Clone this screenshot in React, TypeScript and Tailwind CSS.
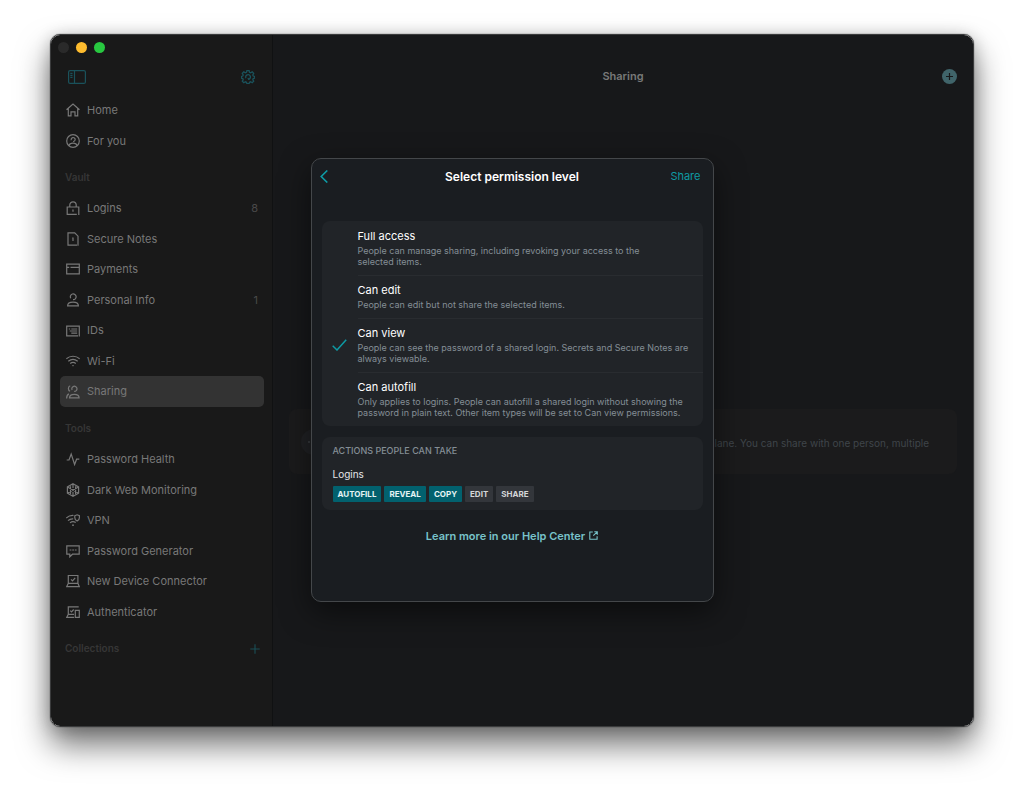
import type { ReactNode } from "react"

type iconProps = {
    children: ReactNode
}
function Icon({ children }: iconProps) {
    return (
        <svg viewBox="0 0 14 14" className="size-[14px] shrink-0" fill="none" stroke="currentColor" strokeWidth="1.2" aria-hidden="true">
            {children}
        </svg>
    )
}

const icons = {
    home: <Icon><path d="M.5 6.800 7 1l6.500 5.800M2.300 5.500v7.400h2.700V8.800h4v4.100h2.700V5.500" /></Icon>,
    forYou: <Icon><circle cx="7" cy="7" r="6.300" /><path d="M5.300 6.200A2 2 0 1 1 7 7.500M3 11.600c.4-1.600 1.700-2.400 4-2.400s3.600.8 4 2.400" /></Icon>,
    logins: <Icon><path d="M3.800 6V4a3.200 3.200 0 0 1 6.400 0v2M10.800 13.300H1.200V6h11.600v7.900M7 8.600v2.200M6.300 9h.8" /></Icon>,
    notes: <Icon><path d="M11 13.200H2V.8h6.700L12 4.200v9.600M7 5.500v3.400M6.200 6h.8" /></Icon>,
    payments: <Icon><path d="M.7 2.200h12.600v9.600H.7zM.7 5.300h2.500M4.500 5.300h8.800" /></Icon>,
    personal: <Icon><path d="M4.700 5.200A2.900 2.900 0 1 1 7 6.700M1.600 12.900c0-2.600 1.700-3.700 5.400-3.700s5.400 1.100 5.400 3.700z" /></Icon>,
    ids: <Icon><path d="M12 11.800H.7V2.200h12.600v10.200M2.800 5h1.400M5.300 5h5.900M3.700 7h7.500M5.300 9.200h5.900" /></Icon>,
    wifi: <Icon><path d="M.3 4.700c3.900-3.300 9.500-3.300 13.400 0M2.300 7.200c2.800-2.300 6.600-2.300 9.400 0M4.200 9.500c1.700-1.300 3.900-1.300 5.600 0" /><path d="M5.800 11.200h2.400L7 12.600z" fill="currentColor" stroke="none" /></Icon>,
    sharing: <Icon><path d="M6.100 5A2.600 2.600 0 1 1 8.200 6.400M3.500 12.900c0-2.500 1.500-3.600 4.800-3.600s4.800 1.100 4.800 3.600zM4.200.8C1.800 1.600 1.800 5.300 4.100 6.200M2.900 8.900C1.400 9.600.7 11 .6 13.500" /></Icon>,
    health: <Icon><path d="M.7 8H3l2.200-6 3.400 10.500 2-5.300h2.700" /></Icon>,
    web: <Icon><path d="m7 .8 5.600 3.100v6.300L7 13.300l-5.600-3.100V3.900zM7 .8V5M7 9v4.300M1.400 10.200 12.600 3.900M1.400 3.900l11.200 6.300M4.500 3.300v7.600M9.600 3.300v7.600" /></Icon>,
    vpn: <Icon><path d="M.2 5C2.500 3 4.800 2.300 7.500 2.500M2 7.600c1.500-1.300 3.400-1.900 5.200-1.700M4 9.900c1.700-1.400 4-1.400 5.700-.3M8.800 2.700l2.300-.9 2.300.9v2c0 1.500-.8 2.600-2.300 3.300-1.500-.7-2.300-1.800-2.300-3.300z" /><circle cx="7" cy="12.200" r=".9" fill="currentColor" stroke="none" /></Icon>,
    generator: <Icon><path d="M.8 1.800h12.400v8.400H6.500L3.800 12.800v-2.600h-3zM3.600 6h1.800M6.200 6H8M8.800 6h1.800" /></Icon>,
    device: <Icon><path d="M2.300 9.300V1.500h9.600v7.800M2.300 9.300h9.600l1.400 3.300H.7zM5 5.300l1.500 1.500 2.700-3" /></Icon>,
    authenticator: <Icon><path d="M8 9.300H2.300V1.800h10.400M2.300 9.300.7 12.400H8M9.300 5.300h4v7.100h-4zM4.300 5.700l1.200 1.200L7.700 4.500" /></Icon>,
}

type item = {
    icon: ReactNode
    label: string
    count?: number
    active?: boolean
}

const mainItems: item[] = [
    { icon: icons.home, label: "Home" },
    { icon: icons.forYou, label: "For you" },
]

const vaultItems: item[] = [
    { icon: icons.logins, label: "Logins", count: 8 },
    { icon: icons.notes, label: "Secure Notes" },
    { icon: icons.payments, label: "Payments" },
    { icon: icons.personal, label: "Personal Info", count: 1 },
    { icon: icons.ids, label: "IDs" },
    { icon: icons.wifi, label: "Wi-Fi" },
    { icon: icons.sharing, label: "Sharing", active: true },
]

const toolItems: item[] = [
    { icon: icons.health, label: "Password Health" },
    { icon: icons.web, label: "Dark Web Monitoring" },
    { icon: icons.vpn, label: "VPN" },
    { icon: icons.generator, label: "Password Generator" },
    { icon: icons.device, label: "New Device Connector" },
    { icon: icons.authenticator, label: "Authenticator" },
]

const permissions = [
    { name: "Full access", lines: ["People can manage sharing, including revoking your access to the", "selected items."] },
    { name: "Can edit", lines: ["People can edit but not share the selected items."] },
    { name: "Can view", lines: ["People can see the password of a shared login. Secrets and Secure Notes are", "always viewable."] },
    { name: "Can autofill", lines: ["Only applies to logins. People can autofill a shared login without showing the", "password in plain text. Other item types will be set to Can view permissions."] },
]

const actions = [
    { name: "AUTOFILL", on: true },
    { name: "REVEAL", on: true },
    { name: "COPY", on: true },
    { name: "EDIT", on: false },
    { name: "SHARE", on: false },
]

type navProps = {
    items: item[]
    height: string
}
function NavList({ items, height }: navProps) {
    return (
        <ul className={`grid auto-rows-fr pr-[8px] pl-[9px] ${height}`}>
            {items.map((i) => (
                <li key={i.label} className="grid">
                    <a href="#" className={`flex items-center gap-[7px] rounded-[5px] px-[6px] ${i.active ? "bg-[#333333]" : ""}`}>
                        {i.icon}
                        <span className="flex-1">{i.label}</span>
                        {i.count && <span className="text-[#4a4a4a]">{i.count}</span>}
                    </a>
                </li>
            ))}
        </ul>
    )
}

function Heading({ children }: { children: ReactNode }) {
    return (
        <div className="flex h-[37px] items-center justify-between pt-[6px] pr-[12px] pl-[14px] text-[10px] font-semibold text-[#363636]">
            {children}
        </div>
    )
}

function Sidebar() {
    return (
        <nav className="w-[222px] shrink-0 border-r border-[#101112] bg-[#191919] text-[11px] text-[#787878]">
            <div className="flex h-[24px] items-center gap-[7px] pl-[7px]">
                <span className="size-[11px] rounded-full bg-[#2a2a2a]" />
                <span className="size-[11px] rounded-full bg-[#febc2e]" />
                <span className="size-[11px] rounded-full bg-[#28c840]" />
            </div>
            <div className="flex h-[36px] items-center justify-between px-[17px] text-[#1a525b]">
                <button aria-label="Toggle sidebar">
                    <svg viewBox="0 0 18 14" className="h-[14px] w-[18px]" fill="none" stroke="currentColor" strokeWidth="1.2">
                        <rect x=".6" y=".6" width="16.800" height="12.800" rx="1.500" />
                        <path d="M6.500.6v12.800M2.300 3.300h2.200M2.300 5.300h2.200M2.300 7.300h2.200" />
                    </svg>
                </button>
                <button aria-label="Settings">
                    <svg viewBox="0 0 14 14" className="size-[14px]" fill="none" stroke="currentColor" strokeWidth="1.3">
                        <path d="M5.900.6h2.200l.4 1.700 1.100.5 1.600-.9 1.500 1.500-.9 1.600.4 1 1.500.5v1.600l-1.500.5-.4 1 .9 1.600-1.500 1.500-1.600-.9-1.100.5-.4 1.300H5.900l-.4-1.300-1.100-.5-1.600.9-1.500-1.500.9-1.600-.4-1-1.400-.5V6.500L1.800 6l.4-1-.9-1.600 1.500-1.500 1.600.9 1.100-.5z" />
                        <path d="M5 8.200A2.400 2.400 0 1 1 7.600 9.300M7 8l.6 1.300L9 8.900" />
                    </svg>
                </button>
            </div>
            <NavList items={mainItems} height="h-[61px]" />
            <Heading>Vault</Heading>
            <NavList items={vaultItems} height="h-[214px]" />
            <Heading>Tools</Heading>
            <NavList items={toolItems} height="h-[183px]" />
            <Heading>
                Collections
                <button aria-label="Add collection" className="text-[#1b4f57]">
                    <svg viewBox="0 0 10 10" className="size-[10px]" stroke="currentColor" strokeWidth="1.1">
                        <path d="M5 .3v9.400M.3 5h9.400" />
                    </svg>
                </button>
            </Heading>
        </nav>
    )
}

function SharingPage() {
    return (
        <main className="flex min-w-0 flex-1 flex-col bg-[#17181a]">
            <header className="grid h-[83px] grid-cols-[1fr_auto_1fr] items-center px-[16px]">
                <h1 className="col-start-2 text-[11px] font-semibold text-[#787878]">Sharing</h1>
                <button aria-label="New share" className="justify-self-end">
                    <svg viewBox="0 0 15 15" className="size-[15px]">
                        <circle cx="7.500" cy="7.500" r="7.500" fill="#40646a" />
                        <path d="M7.500 4v7M4 7.500h7" stroke="#17181a" strokeWidth="1.200" />
                    </svg>
                </button>
            </header>
            <div className="mx-[16px] mt-[291px] flex h-[65px] items-center justify-between rounded-[8px] bg-[#1b1b1c] pr-[28px] pl-[12px]">
                <span className="flex size-[26px] shrink-0 items-center rounded-full bg-[#202124] pl-[7px] text-[#4b5054]">
                    <svg viewBox="0 0 12 12" className="size-[12px]" fill="none" stroke="currentColor" strokeWidth="1.200">
                        <path d="M0 6h2M6 2v8M10 6h2" />
                    </svg>
                </span>
                <p className="pt-[4px] text-[10px] whitespace-nowrap text-[#3f454a]">
                    Share items with people who use Dashlane. You can share with one person, multiple
                </p>
            </div>
        </main>
    )
}

function PermissionDialog() {
    return (
        <div role="dialog" aria-labelledby="dialog-title" className="w-[403px] rounded-[10px] border border-[#44474a] bg-[#1a1d21] px-[10px] pb-[57px] shadow-[0_10px_30px_rgba(0,0,0,0.5)]">
            <header className="-mx-[2px] grid h-[36px] grid-cols-[1fr_auto_1fr] items-center text-[#0e9aa4]">
                <button aria-label="Back" className="justify-self-start">
                    <svg viewBox="0 0 8 13" className="h-[13px] w-[8px]" fill="none" stroke="currentColor" strokeWidth="1.600">
                        <path d="M7.300.5 1.200 6.500l6.100 6" />
                    </svg>
                </button>
                <h2 id="dialog-title" className="text-[12px] font-semibold text-white">Select permission level</h2>
                <button className="justify-self-end pr-[4px] text-[11px]">Share</button>
            </header>

            <fieldset className="mt-[26px] rounded-[8px] bg-[#212428]">
                {permissions.map((p, n) => (
                    <label key={p.name} className="flex">
                        <input type="radio" name="permission" defaultChecked={p.name === "Can view"} className="peer sr-only" />
                        <span className="invisible flex w-[36px] shrink-0 items-center justify-center text-[#0e9aa4] peer-checked:visible">
                            <svg viewBox="0 0 15 12" className="h-[12px] w-[15px]" fill="none" stroke="currentColor" strokeWidth="1.500">
                                <path d="M.7 6.800 5 11 14.200.8" />
                            </svg>
                        </span>
                        <span className={`flex-1 pb-[8px] ${n > 0 ? "border-t border-[#292c30] pt-[6px]" : "pt-[7px]"}`}>
                            <span className="mb-px block text-[11px] leading-[16px] text-white">{p.name}</span>
                            {p.lines.map((l) => (
                                <span key={l} className="block text-[9px] leading-[11px] whitespace-nowrap text-[#848e96]">{l}</span>
                            ))}
                        </span>
                    </label>
                ))}
            </fieldset>

            <section className="mt-[11px] rounded-[8px] bg-[#212428] px-[11px] pt-[8px] pb-[8px]">
                <h3 className="text-[9px] leading-[12px] font-medium text-[#848e96]">ACTIONS PEOPLE CAN TAKE</h3>
                <p className="mt-[10px] text-[10px] leading-[14px] text-[#e4e6e8]">Logins</p>
                <ul className="mt-[5px] flex gap-[3px]">
                    {actions.map((a) => (
                        <li key={a.name} className={`rounded-[1px] px-[5px] text-[8px] leading-[16px] font-bold ${a.on ? "bg-[#02616e] text-[#e6f4f5]" : "bg-[#33363b] text-[#d3d6d8]"}`}>
                            {a.name}
                        </li>
                    ))}
                </ul>
            </section>

            <a href="#" className="mt-[18px] flex items-center justify-center gap-[4px] text-[11px] leading-[16px] font-semibold text-[#78c3ca]">
                Learn more in our Help Center
                <svg viewBox="0 0 9 9" className="size-[9px]" fill="none" stroke="currentColor" strokeWidth="1.100">
                    <path d="M3.800 1H.8v7.300h7.300V5.200M5.300.7h3v3M8.200.8 4.300 4.700" />
                </svg>
            </a>
        </div>
    )
}

function App() {
    return (
        <div className="flex min-h-screen bg-white px-[50px] pt-[34px] pb-[66px] font-['Inter',sans-serif]">
            <div className="relative flex flex-1 overflow-hidden rounded-[10px] border border-[#3a3b3c] shadow-[0_0_1px_#000,0_18px_32px_rgba(0,0,0,0.55),0_2px_16px_rgba(0,0,0,0.2)]">
                <Sidebar />
                <SharingPage />
                <div className="absolute inset-0 flex items-center justify-center pb-[2px]">
                    <PermissionDialog />
                </div>
            </div>
        </div>
    )
}

export default App
